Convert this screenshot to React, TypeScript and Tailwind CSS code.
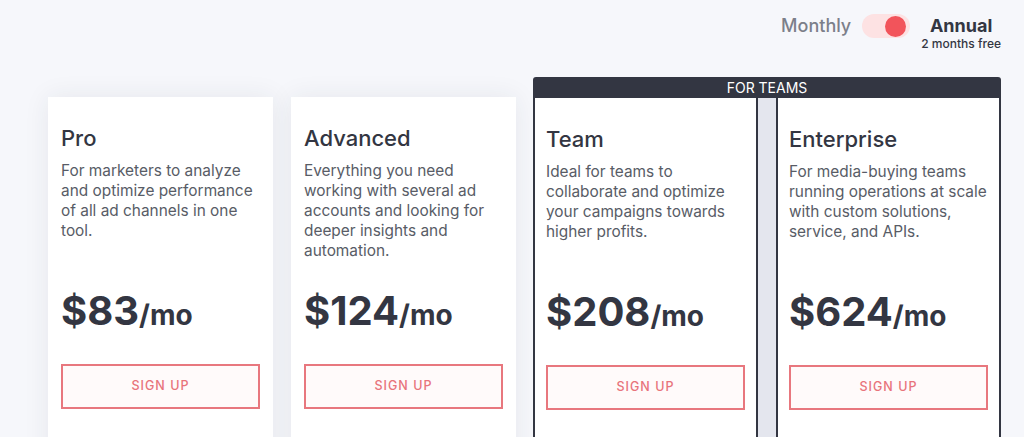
import React, { useState } from 'react';

type Plan = {
    name: string;
    lines: string[];
    price: string;
};

const plans: Plan[] = [
    { name: 'Pro', lines: ['For marketers to analyze', 'and optimize performance', 'of all ad channels in one', 'tool.'], price: '$83' },
    { name: 'Advanced', lines: ['Everything you need', 'working with several ad', 'accounts and looking for', 'deeper insights and', 'automation.'], price: '$124' },
    { name: 'Team', lines: ['Ideal for teams to', 'collaborate and optimize', 'your campaigns towards', 'higher profits.'], price: '$208' },
    { name: 'Enterprise', lines: ['For media-buying teams', 'running operations at scale', 'with custom solutions,', 'service, and APIs.'], price: '$624' },
];

const CardBody = ({ plan }: { plan: Plan }) => (
    <>
        <h3 className="text-[22px] leading-[28px] font-medium text-[#333642]">{plan.name}</h3>
        <p className="mt-[9px] h-[126px] text-[15.4px] leading-[20px] text-[#585c66] whitespace-nowrap">
            {plan.lines.map((line, i) => (
                <span key={i} className="block">{line}</span>
            ))}
        </p>
        <div className="flex items-baseline text-[#333642] font-bold">
            <span className="text-[40px] leading-[48px]">{plan.price}</span>
            <span className="text-[28px] leading-[48px]">/mo</span>
        </div>
        <button className="mt-[25px] w-full h-[45px] border-2 border-[#e8777e] bg-[#fffafa] text-[#e8737b] text-[12.5px] font-medium tracking-[1px]">
            SIGN UP
        </button>
    </>
);

export default function App() {
    const [annual, setAnnual] = useState(true);

    return (
        <div className="min-h-screen bg-[#f6f7fb] font-['Inter','Liberation_Sans',sans-serif] overflow-hidden">
            {/* Billing toggle */}
            <div className="flex justify-end items-start pt-[14px] pr-[23px]">
                <span className="text-[18px] leading-[24px] font-medium text-[#7c7f8a]">Monthly</span>
                <button
                    onClick={() => setAnnual(!annual)}
                    className="ml-[11px] w-[48px] h-[24px] rounded-full bg-[#fde2e3] flex items-center px-[2px]"
                >
                    <span className={`w-[21px] h-[21px] rounded-full bg-[#f2545b] ${annual ? 'ml-auto mr-[2px]' : ''}`} />
                </button>
                <div className="ml-[11px] flex flex-col items-center text-[#333642]">
                    <span className="text-[18px] leading-[24px] font-bold">Annual</span>
                    <span className="text-[12px] leading-[12px] font-medium">2 months free</span>
                </div>
            </div>

            {/* Plans */}
            <div className="flex items-start gap-[18px] pl-[48px] mt-[27px]">
                {plans.slice(0, 2).map((plan) => (
                    <div
                        key={plan.name}
                        className="mt-[20px] w-[225px] h-[380px] bg-white px-[13px] pt-[27px] shadow-[0_0_24px_rgba(40,45,70,0.08)]"
                    >
                        <CardBody plan={plan} />
                    </div>
                ))}

                <div className="flex flex-col -ml-[1px]">
                    <div className="h-[21px] rounded-t-[3px] bg-[#333642] text-white text-[14px] leading-[21px] text-center">
                        FOR TEAMS
                    </div>
                    <div className="flex gap-[18px] bg-[#e4e6ee]">
                        {plans.slice(2).map((plan) => (
                            <div
                                key={plan.name}
                                className="w-[225px] h-[380px] bg-white border-x-2 border-[#333642] px-[11px] pt-[27px]"
                            >
                                <CardBody plan={plan} />
                            </div>
                        ))}
                    </div>
                </div>
            </div>
        </div>
    );
}
